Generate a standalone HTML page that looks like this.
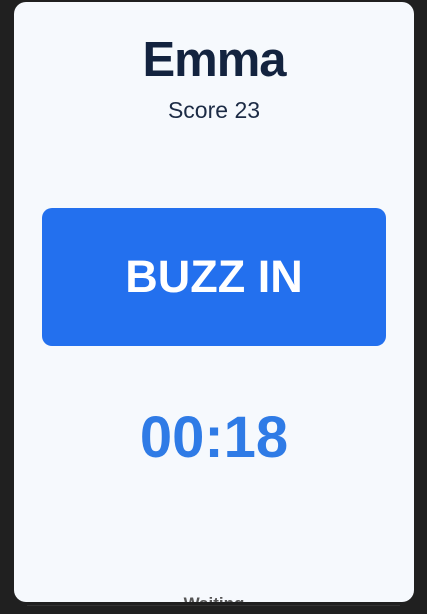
<!DOCTYPE html>
<html><head><style>
html,body{margin:0;padding:0;width:427px;height:614px;background:#202020;overflow:hidden;font-family:"Liberation Sans",sans-serif;}
.card{position:absolute;left:14px;top:2px;width:400px;height:600px;border-radius:12px;background:#f6f9fd;overflow:hidden;}
.name{position:absolute;top:30px;width:100%;text-align:center;font-size:49px;font-weight:bold;color:#13233f;letter-spacing:-1px;}
.score{position:absolute;top:95px;width:100%;text-align:center;font-size:23px;color:#1c2b45;}
.btn{position:absolute;left:28px;top:206px;width:344px;height:138px;border-radius:10px;background:#2370ee;color:#fff;font-size:45px;font-weight:bold;text-align:center;line-height:138px;}
.timer{position:absolute;top:402px;width:100%;text-align:center;font-size:58px;font-weight:bold;color:#2f7be6;}
.wait{position:absolute;top:592px;width:100%;text-align:center;font-size:17px;font-weight:bold;color:#555;}
.line{position:absolute;left:27px;top:605px;width:373px;height:1px;background:#333;}
</style></head><body>
<div class="card">
<div class="name">Emma</div>
<div class="score">Score 23</div>
<div class="btn">BUZZ IN</div>
<div class="timer">00:18</div>
<div class="wait">Waiting</div>
</div>
<div class="line"></div>
</body></html>
